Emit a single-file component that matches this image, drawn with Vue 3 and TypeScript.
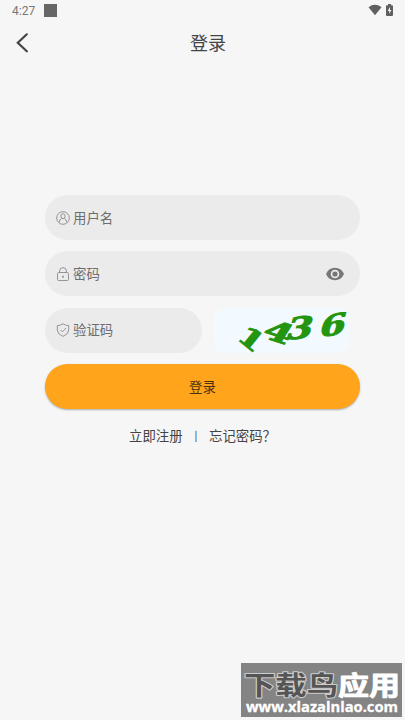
<script setup lang="ts">
import { ref } from 'vue'

interface Glyph {
  char: string
  transform: string
}

const username = ref('')
const password = ref('')
const code = ref('')
const showPassword = ref(false)

const captcha: Glyph[] = [
  { char: '1', transform: 'translate(37.5 30.500) rotate(39) scale(1.38 1.02)' },
  { char: '4', transform: 'translate(65 24) rotate(18) skewX(-14) scale(1.5 1.08)' },
  { char: '3', transform: 'translate(86.5 19.500) rotate(-5) skewX(-20) scale(1.45 1.14)' },
  { char: '6', transform: 'translate(119.5 16.500) rotate(-10) skewX(-24) scale(1.46 1.08)' },
]
</script>

<template>
  <main class="screen">
    <div class="status">
      <span class="time">4:27</span>
      <span class="square"></span>
      <svg class="wifi" width="14" height="12" viewBox="0 0 14 12"><path d="M.5 3.2Q7-1.6 13.5 3.2L7 11.2Z" /></svg>
      <svg class="battery" width="7" height="12" viewBox="0 0 7 12">
        <path d="M2 0h3v1.2h1q1 0 1 1V11q0 1-1 1H1q-1 0-1-1V2.200q0-1 1-1h1z" />
        <path class="bolt" d="M4 3L1.700 6.900h1.600V10L5.400 6H4z" />
      </svg>
    </div>
    <header class="nav">
      <button class="back" aria-label="返回">
        <svg width="14" height="20" viewBox="0 0 14 20"><path d="M11.800 1.300L2.800 9.800l9 8.500" /></svg>
      </button>
      <h1>登录</h1>
    </header>

    <form class="form" @submit.prevent>
      <label class="field">
        <svg class="icon" width="14" height="14" viewBox="0 0 14 14">
          <circle cx="7" cy="7" r="6.300" />
          <ellipse cx="7" cy="5.200" rx="2.100" ry="2.500" />
          <path d="M3.300 11.300Q3.400 8.300 5.700 7.500M8.300 7.500q2.300.8 2.400 3.800" />
        </svg>
        <input v-model="username" placeholder="用户名" />
      </label>
      <label class="field">
        <svg class="icon" width="14" height="14" viewBox="0 0 14 14">
          <rect x="1.500" y="5.500" width="11" height="8" rx="1.200" />
          <path d="M3.600 5.500V4a3.400 3.400 0 0 1 6.800 0v1.500" />
          <path class="heavy" d="M7 8.700v2" />
        </svg>
        <input v-model="password" :type="showPassword ? 'text' : 'password'" placeholder="密码" />
        <svg class="eye" width="18" height="14" viewBox="0 0 18 14" @click="showPassword = !showPassword">
          <path fill-rule="evenodd" d="M0 7Q2.700.8 9 .8T18 7Q15.300 13.200 9 13.200T0 7ZM9 2.700a4.300 4.300 0 1 0 0 8.600a4.300 4.300 0 0 0 0-8.600Z" />
          <circle cx="9" cy="7" r="2.600" />
        </svg>
      </label>
      <div class="row">
        <label class="field short">
          <svg class="icon" width="14" height="14" viewBox="0 0 14 14">
            <path d="M7 .7Q9.500 2.600 12.700 2.600V7q0 4.200-5.700 6.400Q1.300 11.200 1.300 7V2.600Q4.500 2.600 7 .7Z" />
            <path d="M4.400 6.900l2 2L10 5" />
          </svg>
          <input v-model="code" placeholder="验证码" />
        </label>
        <svg class="captcha" width="135" height="45" viewBox="0 0 135 45">
          <text v-for="g in captcha" :key="g.char" :transform="g.transform" y="9.500">{{ g.char }}</text>
        </svg>
      </div>
      <button class="submit">登录</button>
      <div class="links">
        <a>立即注册</a><span class="bar">|</span><a>忘记密码？</a>
      </div>
    </form>

    <svg class="watermark" width="161" height="54" viewBox="0 0 161 54">
      <g transform="translate(0 31.500) scale(1 0.86)">
        <text class="dark" x="3" y="0" textLength="94" lengthAdjust="spacingAndGlyphs">下载鸟</text>
        <text class="light" x="97" y="0" textLength="62" lengthAdjust="spacingAndGlyphs">应用</text>
      </g>
      <text class="url" x="5" y="48.500" textLength="152" lengthAdjust="spacingAndGlyphs">www.xlazalnlao.com</text>
    </svg>
  </main>
</template>

<style>
body {
  background: #f6f6f6;
}
</style>

<style scoped>
.screen {
  position: relative;
  box-sizing: border-box;
  width: 405px;
  height: 720px;
  overflow: hidden;
  background: #f6f6f6;
  color: #444;
  font-family: "Noto Sans CJK SC", sans-serif;
}
svg {
  display: block;
  flex: none;
}
.status {
  display: flex;
  align-items: center;
  height: 20px;
  padding: 0 12px;
  box-sizing: border-box;
}
.time {
  width: 32px;
  font: 12px/20px Roboto, sans-serif;
  color: #777;
  padding-top: 1px;
}
.square {
  width: 13px;
  height: 13px;
  background: #666;
}
.wifi {
  margin-left: auto;
  margin-right: 4px;
  margin-top: -1px;
  fill: #606060;
}
.battery {
  margin-top: -1px;
  fill: #606060;
}
.bolt {
  fill: #f6f6f6;
}
.nav {
  display: grid;
  grid-template-columns: 45px 1fr 45px;
  align-items: center;
  height: 46px;
}
button {
  border: 0;
  font-family: inherit;
}
.back {
  padding: 0 0 0 15px;
  background: none;
}
.back path {
  fill: none;
  stroke: #444;
  stroke-width: 2.2;
  stroke-linecap: round;
}
h1 {
  margin: 0;
  padding: 0 0 2px 11px;
  font-size: 18px;
  line-height: 26px;
  font-weight: 400;
  text-align: center;
}
.form {
  display: flex;
  flex-direction: column;
  gap: 11.300px;
  padding: 129px 45px 0;
}
.field {
  display: flex;
  align-items: center;
  gap: 3px;
  box-sizing: border-box;
  height: 45px;
  padding: 0 16px 0 11px;
  border-radius: 23px;
  background: #ebebeb;
}
.icon {
  fill: none;
  stroke: #8b8b8b;
  stroke-width: 0.9;
}
.heavy {
  stroke-width: 1.5;
}
input {
  flex: 1;
  min-width: 0;
  padding: 0 0 2px;
  border: 0;
  outline: 0;
  background: none;
  font: 13.400px/22px "Noto Sans CJK SC", sans-serif;
  color: #444;
}
input::placeholder {
  color: #6d6d6d;
  opacity: 1;
}
.eye {
  fill: #777;
}
.row {
  display: flex;
  gap: 12px;
}
.short {
  width: 157px;
}
.captcha {
  overflow: visible;
  border-radius: 12px;
  background: #f2faff;
}
.captcha text {
  font: bold 26px "DejaVu Serif", serif;
  text-anchor: middle;
  fill: #24950f;
  stroke: #24950f;
  stroke-width: 0.9;
}
.submit {
  height: 45px;
  padding: 0 0 1px;
  border-radius: 23px;
  background: #ffa41b;
  color: #49300d;
  font-size: 13.400px;
  box-shadow: 0 1px 2px #0000004d;
}
.links {
  display: flex;
  padding-left: 84px;
  margin-top: 5px;
  font-size: 13.400px;
  line-height: 20px;
  white-space: nowrap;
}
.bar {
  width: 26.500px;
  text-align: center;
  font-size: 10px;
  font-weight: 500;
}
.watermark {
  position: absolute;
  left: 241px;
  top: 663px;
  background: #848484;
}
.watermark text {
  paint-order: stroke;
  stroke-linejoin: round;
}
.dark,
.light {
  font: 700 30px "Noto Sans CJK SC", sans-serif;
}
.dark {
  fill: #555;
  stroke: #ccc;
  stroke-width: 2.4px;
}
.light {
  fill: #fff;
  stroke: #fff;
  stroke-width: 1px;
}
.url {
  font: 700 15px "Open Sans", sans-serif;
  fill: #fff;
  stroke: #fff;
  stroke-width: 0.3px;
}
</style>
